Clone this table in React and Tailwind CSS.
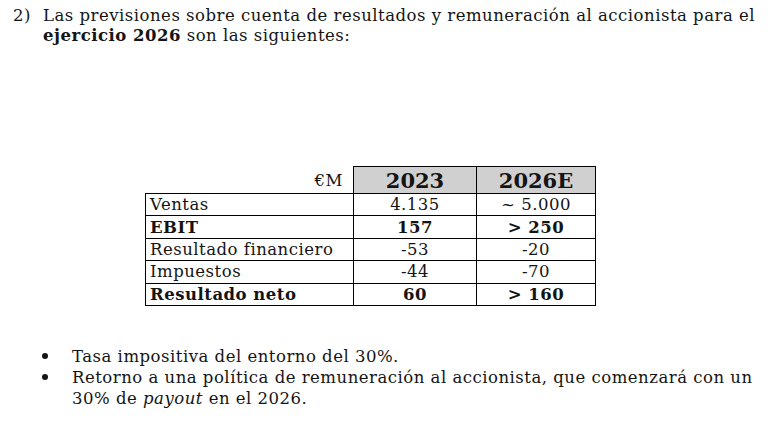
import React from "react";

const rows = [
  { label: "Ventas", a: "4.135", b: "~ 5.000", bold: false },
  { label: "EBIT", a: "157", b: "> 250", bold: true },
  { label: "Resultado financiero", a: "-53", b: "-20", bold: false },
  { label: "Impuestos", a: "-44", b: "-70", bold: false },
  { label: "Resultado neto", a: "60", b: "> 160", bold: true },
];

function Bullet() {
  return (
    <span className="w-[72px] pl-[42px] shrink-0 flex items-center h-[21px]">
      <span className="w-[6px] h-[6px] rounded-full bg-[#141414]" />
    </span>
  );
}

export default function App() {
  return (
    <div className="w-[774px] h-[422px] bg-white text-[#141414] font-['DejaVu_Serif',serif] text-[16.5px] tracking-[0.5px] overflow-hidden">
      <div className="flex pt-[6px] leading-[20px]">
        <span className="w-[43px] pl-[13px] shrink-0">2)</span>
        <p className="whitespace-nowrap">
          Las previsiones sobre cuenta de resultados y remuneración al accionista para el
          <br />
          <b>ejercicio 2026</b> son las siguientes:
        </p>
      </div>

      <div className="pl-[145px] pt-[120px]">
        <table className="border-collapse leading-[21px]">
          <thead>
            <tr className="h-[27px]">
              <th className="w-[208px] border-b border-black text-right font-normal pr-[10px] align-bottom leading-[24px]">€M</th>
              <th className="w-[123px] border border-black bg-[#d0d0d0] text-[21px] font-bold tracking-normal">2023</th>
              <th className="w-[119px] border border-black bg-[#d0d0d0] text-[21px] font-bold tracking-normal">2026E</th>
            </tr>
          </thead>
          <tbody>
            {rows.map((r) => (
              <tr key={r.label} className={`h-[22.4px] ${r.bold ? "font-bold" : ""}`}>
                <td className="border border-black pl-[4px]">{r.label}</td>
                <td className="border border-black text-center">{r.a}</td>
                <td className="border border-black text-center">{r.b}</td>
              </tr>
            ))}
          </tbody>
        </table>
      </div>

      <ul className="pt-[40px] leading-[21px]">
        <li className="flex">
          <Bullet />
          <span>Tasa impositiva del entorno del 30%.</span>
        </li>
        <li className="flex">
          <Bullet />
          <span className="whitespace-nowrap">
            Retorno a una política de remuneración al accionista, que comenzará con un
            <br />
            30% de <i>payout</i> en el 2026.
          </span>
        </li>
      </ul>
    </div>
  );
}
